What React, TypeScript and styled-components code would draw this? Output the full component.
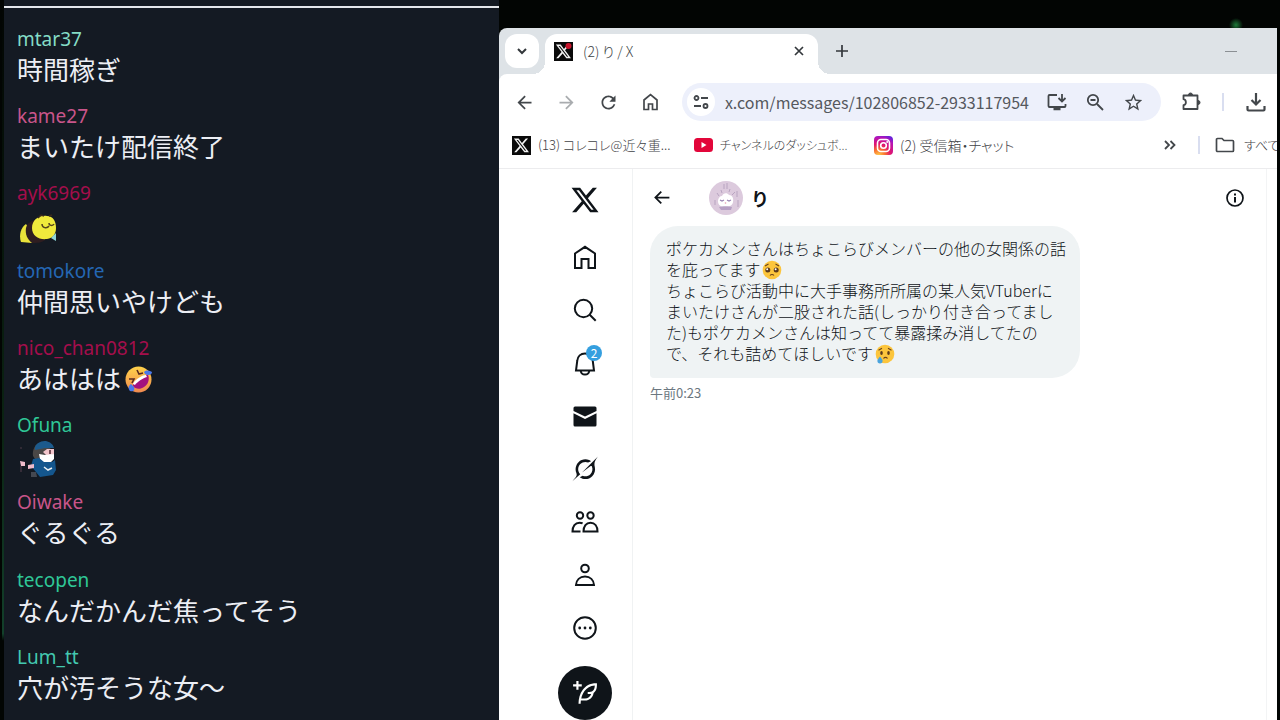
import React from "react";
import styled, { createGlobalStyle } from "styled-components";

const GlobalStyle = createGlobalStyle`
  * { box-sizing: border-box; }
  body {
    margin: 0;
    background: #020503;
    font-family: "Noto Sans CJK JP", "Noto Sans", sans-serif;
  }
  button { border: 0; padding: 0; background: none; color: inherit; font: inherit; cursor: pointer; }
  svg { display: block; flex: none; }
  a { color: inherit; text-decoration: none; }
`;

/* ---------- stage ---------- */

const Stage = styled.div`
  display: grid;
  grid-template-columns: minmax(0, 495fr) minmax(0, 778fr);
  height: 100vh;
  padding: 0 3px 0 4px;
  overflow: hidden;
  background:
    radial-gradient(circle at 1236px 25px, #1c7a38 0, transparent 7px),
    linear-gradient(#020503, #0b2413 60%, #12402a 88%, #020503 89%) 2px 0 / 2px 100% no-repeat,
    #020503;
`;

/* ---------- chat ---------- */

const Chat = styled.section`
  display: flex;
  flex-direction: column;
  background: #141a23;
  overflow: hidden;
`;

const ChatTop = styled.div`
  height: 8px;
  flex: none;
  border-bottom: 2px solid #e4e7ec;
`;

const ChatList = styled.ul`
  display: flex;
  flex-direction: column;
  flex: 1;
  list-style: none;
  margin: 0;
  padding: 17px 13px 0;
`;

const ChatItem = styled.li`
  display: grid;
  grid-template-rows: 28px 1fr;
  flex: 1 0 76px;
`;

const UserName = styled.span<{ $color: string }>`
  font: 19px/28px "Noto Sans", sans-serif;
  color: ${(p) => p.$color};
`;

const ChatText = styled.span`
  display: flex;
  align-items: flex-start;
  font-size: 26px;
  line-height: 32px;
  color: #eceef4;
  white-space: nowrap;
`;

const EmoteSlot = styled.span`
  padding: 2px 0 0 3px;
`;

const EmojiSlot = styled.span`
  padding: 3px 0 0 3px;
`;

/* ---------- browser ---------- */

const Browser = styled.section`
  display: flex;
  flex-direction: column;
  margin-top: 28px;
  min-height: 0;
  background: #dee3e7;
  border-radius: 8px 0 0 0;
  overflow: hidden;
`;

const TabStrip = styled.div`
  display: flex;
  align-items: flex-start;
  height: 46px;
  padding: 6px 39px 0 6px;
  color: #33373b;
`;

const TabSearch = styled.button`
  display: grid;
  place-items: center;
  width: 34px;
  height: 34px;
  margin-right: 6px;
  border-radius: 12px;
  background: #fff;
`;

const Tab = styled.div`
  position: relative;
  display: flex;
  align-items: center;
  gap: 10px;
  width: 273px;
  height: 40px;
  padding: 0 12px 6px 9px;
  border-radius: 12px 12px 0 0;
  background: #fff;

  &::before, &::after {
    content: "";
    position: absolute;
    bottom: 0;
    width: 12px;
    height: 12px;
  }
  &::before {
    left: -12px;
    background: radial-gradient(circle at 0 0, transparent 12px, #fff 12px);
  }
  &::after {
    right: -12px;
    background: radial-gradient(circle at 100% 0, transparent 12px, #fff 12px);
  }
`;

const TabTitle = styled.span`
  flex: 1;
  font-size: 14px;
  line-height: 20px;
  font-weight: 300;
  color: #3c3f43;
  font-feature-settings: "palt";
`;

const StripButton = styled.button<{ $push?: boolean }>`
  display: grid;
  place-items: center;
  width: 14px;
  height: 34px;
  margin-left: ${(p) => (p.$push ? "auto" : "17px")};
`;

const TabClose = styled.button`
  display: grid;
  place-items: center;
  width: 14px;
  height: 20px;
`;

const Chrome = styled.div`
  background: #fff;
  border-radius: 8px 0 0 0;
  border-bottom: 1px solid #ececee;
`;

const Toolbar = styled.div`
  display: flex;
  align-items: center;
  height: 56px;
  padding-left: 4px;
  color: #43474b;
`;

const ToolButton = styled.button<{ $dim?: boolean; $width?: number }>`
  display: grid;
  place-items: center;
  width: ${(p) => p.$width ?? 42}px;
  height: 40px;
  flex: none;
  color: ${(p) => (p.$dim ? "#a9acaf" : "inherit")};
`;

const Omnibox = styled.form`
  display: flex;
  align-items: center;
  flex: 1;
  min-width: 0;
  height: 38px;
  margin: 0 10px 0 11px;
  padding: 0 9px 0 5px;
  border-radius: 20px;
  background: #edf0fb;
`;

const SiteInfo = styled.button`
  display: grid;
  place-items: center;
  width: 28px;
  height: 28px;
  flex: none;
  border-radius: 50%;
  background: #fff;
`;

const UrlInput = styled.input`
  flex: 1;
  min-width: 0;
  padding: 0 0 0 10px;
  border: 0;
  outline: 0;
  background: transparent;
  font: 16px/24px "Noto Sans CJK JP", sans-serif;
  color: #55585e;
`;

const Divider = styled.span<{ $gap: number }>`
  width: 2px;
  height: 18px;
  flex: none;
  margin: 0 ${(p) => p.$gap}px;
  background: #d9def0;
`;

const Bookmarks = styled.nav`
  display: flex;
  align-items: center;
  height: 38px;
  padding: 0 0 8px 13px;
  overflow: hidden;
  color: #43474b;
`;

const Bookmark = styled.a<{ $width?: number; $size: number }>`
  display: flex;
  align-items: center;
  gap: 7px;
  flex: none;
  width: ${(p) => (p.$width ? `${p.$width}px` : "auto")};
  font-size: ${(p) => p.$size}px;
  line-height: 20px;
  font-weight: 300;
  color: #3f4246;
  white-space: nowrap;
  font-feature-settings: "palt";
`;

const Spacer = styled.span`
  flex: 1;
`;

const AllBookmarks = styled.a`
  display: flex;
  align-items: center;
  gap: 9px;
  width: 62px;
  flex: none;
  overflow: hidden;
  white-space: nowrap;
  font-size: 13px;
  line-height: 20px;
  font-weight: 300;
  color: #3f4246;
  font-feature-settings: "palt";
`;

/* ---------- page ---------- */

const Page = styled.div`
  display: flex;
  flex: 1;
  min-height: 0;
  padding-right: 10px;
  background: #fff;
  color: #0f1419;
`;

const SideNav = styled.nav`
  display: flex;
  flex-direction: column;
  align-items: center;
  width: 134px;
  flex: none;
  padding-left: 39px;
  border-right: 1px solid #f0f2f3;
`;

const NavLink = styled.a<{ $height?: number }>`
  display: grid;
  place-items: center;
  width: 54px;
  height: ${(p) => p.$height ?? 53}px;
  flex: none;
`;

const BellWrap = styled.span`
  position: relative;
`;

const Badge = styled.span`
  position: absolute;
  top: -4px;
  right: -3px;
  width: 16px;
  height: 16px;
  border-radius: 50%;
  background: #359fdf;
  color: #fff;
  font-size: 12px;
  line-height: 16px;
  text-align: center;
`;

const PostButton = styled.button`
  display: grid;
  place-items: center;
  width: 54px;
  height: 54px;
  flex: none;
  margin-top: 12px;
  border-radius: 50%;
  background: #0f1419;
  color: #fff;
`;

const Conversation = styled.main`
  flex: 1;
  min-width: 0;
  padding: 0 17px;
  border-right: 1px solid #f3f4f5;
`;

const ConversationHead = styled.header`
  display: flex;
  align-items: center;
  height: 57px;
  padding-right: 3px;
`;

const HeadButton = styled.button`
  display: grid;
  place-items: center;
  width: 22px;
  height: 22px;
`;

const Avatar = styled.span`
  width: 34px;
  height: 34px;
  margin: 0 8px 0 37px;
  border-radius: 50%;
  overflow: hidden;
`;

const PeerName = styled.h1`
  flex: 1;
  margin: 0;
  font-size: 18px;
  line-height: 24px;
  font-weight: 700;
`;

const Bubble = styled.p`
  width: max-content;
  max-width: 100%;
  margin: 0;
  padding: 12px 14px 14px 16px;
  border-radius: 28px 28px 28px 4px;
  background: #eff3f4;
  font-size: 16px;
  line-height: 21px;
  font-weight: 300;
  color: #0f1419;
  white-space: nowrap;

  svg { display: inline-block; margin-left: 2px; vertical-align: -4px; }
`;

const Time = styled.time`
  display: block;
  margin-top: 5px;
  font-size: 13px;
  line-height: 20px;
  color: #6b7780;
`;

/* ---------- drawings ---------- */

const X_PATH =
  "M18.244 2.25h3.308l-7.227 8.26 8.502 11.24H16.17l-5.214-6.817L4.99 21.75H1.68l7.73-8.835L1.254 2.25H8.08l4.713 6.231zm-1.161 17.52h1.833L7.084 4.126H5.117z";

const Solid = ({ d, size, box = "0 0 24 24" }: { d: string; size: number; box?: string }) => (
  <svg width={size} height={size} viewBox={box} fill="currentColor" aria-hidden="true">
    <path d={d} />
  </svg>
);

const Line = ({
  size = 28,
  width = 2,
  box = 28,
  children,
}: {
  size?: number;
  width?: number;
  box?: number;
  children: React.ReactNode;
}) => (
  <svg
    width={size}
    height={size}
    viewBox={`0 0 ${box} ${box}`}
    fill="none"
    stroke="currentColor"
    strokeWidth={width}
    aria-hidden="true"
  >
    {children}
  </svg>
);

const XFavicon = ({ dot }: { dot?: boolean }) => (
  <svg width="19" height="19" viewBox="0 0 19 19" aria-hidden="true">
    <rect width="19" height="19" fill="#0a0a0a" />
    <path d={X_PATH} transform="translate(1 1) scale(.7)" fill="#f2f2f2" />
    {dot && <circle cx="14.500" cy="4" r="3" fill="#c8142c" />}
  </svg>
);

const YouTubeIcon = () => (
  <svg width="19" height="14" viewBox="0 0 19 14" aria-hidden="true">
    <rect width="19" height="14" rx="3.500" fill="#e2063a" />
    <path d="M7.500 4v6l5-3z" fill="#fff" />
  </svg>
);

const InstagramIcon = () => (
  <svg width="19" height="19" viewBox="0 0 19 19" aria-hidden="true">
    <defs>
      <radialGradient id="ig" cx=".25" cy="1.050" r="1.150">
        <stop offset="0" stopColor="#ffd34d" />
        <stop offset=".3" stopColor="#f9722f" />
        <stop offset=".55" stopColor="#e0156e" />
        <stop offset=".85" stopColor="#b414b8" />
        <stop offset="1" stopColor="#6a22d8" />
      </radialGradient>
    </defs>
    <rect width="19" height="19" rx="4" fill="url(#ig)" />
    <rect x="3.500" y="3.500" width="12" height="12" rx="3.500" fill="none" stroke="#fff" strokeWidth="1.600" />
    <circle cx="9.500" cy="9.500" r="2.800" fill="none" stroke="#fff" strokeWidth="1.600" />
    <circle cx="13.200" cy="5.900" r="1" fill="#fff" />
  </svg>
);

const Bee = () => (
  <svg width="36" height="36" viewBox="0 0 36 36" role="img" aria-label="蜂">
    <path d="M6 15C0 19-1 28 1 33l11 1 3-4z" fill="#e9e23a" />
    <path d="M6 19c1-5 6-8 11-8l8 20c-4 3-8 3-13 3C7 30 5 25 6 19z" fill="#2e1d20" />
    <path d="M12 19C12 11 19 6 27 7c6 0 9 5 9 12 0 6-3 10-9 11-8 1-15-3-15-11z" fill="#f0ea3c" />
    <path d="M22 15c0 4 5 5 7 2m0-3c0 3 4 3 5 1" stroke="#55431d" strokeWidth="1.500" fill="none" />
    <path d="M18 9l3-3 3 1m5 0l3-1" stroke="#3a2a1c" strokeWidth="1.500" fill="none" />
    <path d="M31 29l5-5v8z" fill="#8fd6d8" />
  </svg>
);

const Ninja = () => (
  <svg width="36" height="36" viewBox="0 0 36 36" role="img" aria-label="忍者">
    <path d="M13 15c-1-6 2-13 9-14l10 8v7l-3 5H17z" fill="#4a4746" />
    <path d="M15 6C17 1 22 0 26 0c4 1 7 3 8 7l-9 0-10 2z" fill="#1c5a8c" />
    <path d="M23 11l4-3 7 0 0 5-6 3z" fill="#f3c6cc" />
    <path d="M30 9v4" stroke="#4b2430" strokeWidth="1.500" />
    <path d="M19 13l6 1 9-1v5l-3 3h-8l-3-3z" fill="#fff" />
    <path d="M13 18l6-1 5 4h8l3-2 1 10-3 5-13 2-4-5-5-6z" fill="#14568d" />
    <path d="M0 20l5 1v4H1zM8 24l6-1v4l-6 1z" fill="#f0bccb" />
    <path d="M24 26l4 3 4-2m-3 1v2" stroke="#e8eef2" strokeWidth="1.500" fill="none" />
    <path d="M0 7h2M1 25v6" stroke="#4d3a48" strokeWidth="1.200" />
    <path d="M11 31l5 0 1 5h-6z" fill="#444851" />
  </svg>
);

const Rofl = () => (
  <svg width="29" height="29" viewBox="0 0 29 29" role="img" aria-label="🤣">
    <defs>
      <linearGradient id="rofl" x1="0" y1="0" x2="0" y2="1">
        <stop offset="0" stopColor="#ffd24a" />
        <stop offset="1" stopColor="#f08a50" />
      </linearGradient>
    </defs>
    <circle cx="14.500" cy="14.500" r="13" fill="url(#rofl)" />
    <path d="M9 21c-1-3 12-13 15-11 2 4 0 10-4 12-4 3-9 2-11-1z" fill="#a3127f" />
    <path d="M9 19c0-3 10-10 13-9l1 2c-4 1-10 5-12 8z" fill="#fff" />
    <path d="M5 14l5 0-2 4M13 5l2 4 4-1" stroke="#5a2a20" strokeWidth="1.600" fill="none" />
    <path d="M20 7c3-3 6-1 8 0 0 3-4 4-7 2z" fill="#4a78ea" />
    <path d="M7 19c-3 2-3 5-1 7 4 1 5-1 4-4z" fill="#4a78ea" />
  </svg>
);

const Pleading = () => (
  <svg width="20" height="20" viewBox="0 0 20 20" role="img" aria-label="🥺">
    <circle cx="10" cy="10" r="9.300" fill="#fcc53c" />
    <circle cx="5.800" cy="10" r="2.500" fill="#5c3b1c" />
    <circle cx="14.200" cy="10" r="2.500" fill="#5c3b1c" />
    <circle cx="5.200" cy="9.200" r="1" fill="#fff" />
    <circle cx="13.600" cy="9.200" r="1" fill="#fff" />
    <path d="M3 6l3.500-2M17 6l-3.500-2M8 15.500c1-1.300 3-1.300 4 0" stroke="#6b431d" strokeWidth="1.100" fill="none" />
  </svg>
);

const Crying = () => (
  <svg width="20" height="20" viewBox="0 0 20 20" role="img" aria-label="😢">
    <circle cx="10" cy="10" r="9.300" fill="#fcc53c" />
    <ellipse cx="6.500" cy="9" rx="1.300" ry="1.900" fill="#5c3b1c" />
    <ellipse cx="13.500" cy="9" rx="1.300" ry="1.900" fill="#5c3b1c" />
    <path d="M3.500 6.200l3.500-2M16.500 6.200l-3.500-2M8.500 14.500c1-1.500 3-1.500 4 0" stroke="#6b431d" strokeWidth="1.100" fill="none" />
    <path d="M5 12.500c1.500 2 2.600 3 2.600 4.300a2.600 2.600 0 0 1-5.200 0c0-1.300 1.100-2.300 2.600-4.300z" fill="#4aa3dc" />
  </svg>
);

const AvatarArt = () => (
  <svg width="34" height="34" viewBox="0 0 34 34" aria-hidden="true">
    <rect width="34" height="34" fill="#dccadd" />
    <path d="M15 3v5M18 2v6M12 9l1 3M21 8l-1 3M8 12l2 3M26 11l-3 3M28 10v6M29 19v7M6 19v5" stroke="#b8a4c0" strokeWidth="1" />
    <path d="M9 20c0-3 2-5 4-5 1-3 5-4 7-1 3 0 5 3 4 7 0 3-4 5-8 5s-7-2-7-6z" fill="#fff" />
    <path d="M11 19l2 1 2-1M18 19l2 1 2-1" stroke="#9c86b4" strokeWidth="1.200" fill="none" />
    <path d="M10 26c3-1 10-1 13 0l-1 3H12z" fill="#b6a0c4" />
    <circle cx="16.500" cy="22" r=".8" fill="#e59ab0" />
  </svg>
);

/* ---------- data ---------- */

type Entry = { name: string; color: string; text?: string; art?: React.ReactNode };

const entries: Entry[] = [
  { name: "mtar37", color: "#84dcc6", text: "時間稼ぎ" },
  { name: "kame27", color: "#c9558a", text: "まいたけ配信終了" },
  { name: "ayk6969", color: "#a50e4c", art: <EmoteSlot><Bee /></EmoteSlot> },
  { name: "tomokore", color: "#2467b4", text: "仲間思いやけども" },
  { name: "nico_chan0812", color: "#a50e4c", text: "あははは", art: <EmojiSlot><Rofl /></EmojiSlot> },
  { name: "Ofuna", color: "#2fc797", art: <EmoteSlot><Ninja /></EmoteSlot> },
  { name: "Oiwake", color: "#c9558a", text: "ぐるぐる" },
  { name: "tecopen", color: "#2fc797", text: "なんだかんだ焦ってそう" },
  { name: "Lum_tt", color: "#43c9b0", text: "穴が汚そうな女～" },
];

export default function App() {
  return (
    <>
      <GlobalStyle />
      <Stage>
        <Chat aria-label="チャット">
          <ChatTop />
          <ChatList>
            {entries.map((e) => (
              <ChatItem key={e.name}>
                <UserName $color={e.color}>{e.name}</UserName>
                <ChatText>
                  {e.text}
                  {e.art}
                </ChatText>
              </ChatItem>
            ))}
          </ChatList>
        </Chat>

        <Browser>
          <TabStrip>
            <TabSearch aria-label="タブを検索">
              <Line size={12} box={12}><path d="M2 4l4 4 4-4" /></Line>
            </TabSearch>
            <Tab>
              <XFavicon dot />
              <TabTitle>(2) り / X</TabTitle>
              <TabClose aria-label="タブを閉じる">
                <Line size={12} box={12} width={1.7}><path d="M2 2l8 8M10 2l-8 8" /></Line>
              </TabClose>
            </Tab>
            <StripButton aria-label="新しいタブ">
              <Line size={14} box={14} width={1.7}><path d="M7 1v12M1 7h12" /></Line>
            </StripButton>
            <StripButton $push aria-label="最小化">
              <Line size={12} box={12} width={1}><path d="M0 6.500h12" stroke="#8b9094" /></Line>
            </StripButton>
          </TabStrip>

          <Chrome>
            <Toolbar>
              <ToolButton aria-label="戻る">
                <Solid size={21} d="M20 11H7.830l5.590-5.590L12 4l-8 8 8 8 1.410-1.410L7.830 13H20z" />
              </ToolButton>
              <ToolButton $dim aria-label="進む">
                <Solid size={21} d="M4 11h12.170l-5.590-5.590L12 4l8 8-8 8-1.410-1.410L16.170 13H4z" />
              </ToolButton>
              <ToolButton aria-label="再読み込み">
                <Solid size={21} d="M17.650 6.350C16.200 4.900 14.210 4 12 4c-4.420 0-7.990 3.580-7.990 8s3.570 8 7.990 8c3.730 0 6.840-2.550 7.730-6h-2.080c-.82 2.330-3.040 4-5.650 4-3.310 0-6-2.690-6-6s2.690-6 6-6c1.660 0 3.140.69 4.220 1.780L13 11h7V4z" />
              </ToolButton>
              <ToolButton aria-label="ホーム">
                <Line size={20} box={20} width={1.7}>
                  <path d="M4 8l6.500-5.500L17 8v9.500h-4.500V12h-4v5.500H4z" />
                </Line>
              </ToolButton>
              <Omnibox>
                <SiteInfo type="button" aria-label="サイト情報">
                  <Line size={18} box={18} width={1.8}>
                    <circle cx="4.500" cy="5" r="2" />
                    <path d="M9 5h7M2 13h7" />
                    <circle cx="13.500" cy="13" r="2" />
                  </Line>
                </SiteInfo>
                <UrlInput aria-label="アドレス" defaultValue="x.com/messages/102806852-2933117954" />
                <ToolButton type="button" $width={38} aria-label="アプリをインストール">
                  <Line size={22} box={22} width={1.8}>
                    <path d="M11 4H3.500a1 1 0 0 0-1 1v10a1 1 0 0 0 1 1h15a1 1 0 0 0 1-1v-2" />
                    <path d="M7.500 18h7" strokeWidth="2.500" />
                    <path d="M16 3v7M12.500 7l3.500 3.500L19.500 7" />
                  </Line>
                </ToolButton>
                <ToolButton type="button" $width={38} aria-label="ズーム">
                  <Line size={20} box={20} width={1.8}>
                    <circle cx="8" cy="8" r="5.200" />
                    <path d="M12 12l6 6M5.500 8h5" />
                  </Line>
                </ToolButton>
                <ToolButton type="button" $width={38} aria-label="ブックマークに追加">
                  <Solid size={21} d="M22 9.240l-7.190-.62L12 2 9.190 8.630 2 9.240l5.460 4.730L5.820 21 12 17.270 18.180 21l-1.630-7.030L22 9.240zM12 15.400l-3.760 2.270 1-4.280-3.320-2.880 4.380-.38L12 6.100l1.710 4.040 4.380.38-3.320 2.880 1 4.280L12 15.400z" />
                </ToolButton>
              </Omnibox>
              <ToolButton $width={40} aria-label="拡張機能">
                <Line size={22} box={22} width={1.8}>
                  <path d="M3.500 4.500h14v13.500h-14v-3.800c3.200-.6 3.200-5.400 0-6z" strokeLinejoin="round" />
                  <path d="M8.500 4a2 2 0 0 1 4 0zM18 9.500a2 2 0 0 1 0 4z" fill="currentColor" strokeWidth="1" />
                </Line>
              </ToolButton>
              <Divider $gap={11} />
              <ToolButton aria-label="ダウンロード">
                <Line size={22} box={22} width={2.2}>
                  <path d="M11 2v11M6.500 9l4.500 4.500L15.500 9M2.500 15v3.500a1 1 0 0 0 1 1h15a1 1 0 0 0 1-1V15" />
                </Line>
              </ToolButton>
            </Toolbar>

            <Bookmarks aria-label="ブックマーク">
              <Bookmark href="#korekore" $width={182} $size={13}>
                <XFavicon />
                (13) コレコレ@近々重...
              </Bookmark>
              <Bookmark href="#dashboard" $width={180} $size={12}>
                <YouTubeIcon />
                チャンネルのダッシュボ...
              </Bookmark>
              <Bookmark href="#inbox" $size={14}>
                <InstagramIcon />
                (2) 受信箱・チャット
              </Bookmark>
              <Spacer />
              <ToolButton $width={26} aria-label="その他のブックマーク">
                <Line size={12} box={12} width={1.8}><path d="M1 2l4 4-4 4M6.500 2l4 4-4 4" /></Line>
              </ToolButton>
              <Divider $gap={15} />
              <AllBookmarks href="#all">
                <Line size={20} box={20} width={1.7}>
                  <path d="M1.500 4.500a1 1 0 0 1 1-1H7l2 2h8.500a1 1 0 0 1 1 1V15.500a1 1 0 0 1-1 1h-15a1 1 0 0 1-1-1z" stroke="#43474b" />
                </Line>
                すべて
              </AllBookmarks>
            </Bookmarks>
          </Chrome>

          <Page>
            <SideNav aria-label="メイン">
              <NavLink href="#x" $height={61} aria-label="X"><Solid size={30} d={X_PATH} /></NavLink>
              <NavLink href="#home" aria-label="ホーム">
                <Line><path d="M4 10.500L14 3.800l10 6.700V25h-6.500v-9h-7v9H4z" /></Line>
              </NavLink>
              <NavLink href="#search" aria-label="検索">
                <Line><circle cx="12.500" cy="12.500" r="8.700" /><path d="M18.700 18.700l6 6" /></Line>
              </NavLink>
              <NavLink href="#notifications" aria-label="通知">
                <BellWrap>
                  <Line>
                    <path d="M14 4.500c-4.300 0-7.300 3-7.700 7L5 21.500h18l-1.300-10c-.4-4-3.400-7-7.700-7z" />
                    <path d="M9.800 22c.5 4.700 7.900 4.700 8.400 0" />
                  </Line>
                  <Badge>2</Badge>
                </BellWrap>
              </NavLink>
              <NavLink href="#messages" aria-label="メッセージ">
                <Solid size={28} box="0 0 28 28" d="M2.500 9V6a1.500 1.500 0 0 1 1.500-1.500h20A1.500 1.500 0 0 1 25.500 6v3L14 14.600zM2.500 11.300L14 17l11.500-5.700V23a1.500 1.500 0 0 1-1.500 1.500H4A1.500 1.500 0 0 1 2.500 23z" />
              </NavLink>
              <NavLink href="#grok" aria-label="Grok">
                <Solid
                  size={26}
                  box="0 0 33 32"
                  d="M12.745 20.540l10.970-8.190c.539-.4 1.307-.244 1.564.38 1.349 3.288.746 7.241-1.938 9.955-2.683 2.714-6.417 3.310-9.830 1.954l-3.728 1.745c5.347 3.697 11.840 2.782 15.898-1.324 3.219-3.255 4.216-7.692 3.284-11.693l.008.009c-1.351-5.878.332-8.227 3.782-13.031L33 0l-4.540 4.590v-.014L12.743 20.544m-2.263 1.987c-3.837-3.707-3.175-9.446.1-12.755 2.420-2.449 6.388-3.448 9.852-1.979l3.720-1.737c-.67-.49-1.530-1.017-2.515-1.387-4.455-1.854-9.789-.931-13.410 2.728-3.483 3.523-4.579 8.940-2.697 13.561 1.405 3.454-.899 5.898-3.220 8.364C1.077 30.830.262 31.657 0 32l10.478-9.466"
                />
              </NavLink>
              <NavLink href="#communities" aria-label="コミュニティ">
                <Line>
                  <circle cx="9" cy="7.500" r="3.200" />
                  <circle cx="19.500" cy="7.500" r="3.200" />
                  <path d="M12.500 23.500c0-5.300 2.700-8.800 7-8.800s7 3.500 7 8.800zM9.500 23.500h-8c0-5.300 2.700-8.800 7-8.800 1.200 0 2.200.2 3.100.7" />
                </Line>
              </NavLink>
              <NavLink href="#profile" aria-label="プロフィール">
                <Line>
                  <circle cx="14" cy="7.500" r="3.800" />
                  <path d="M5 24c.3-5 3.800-8.500 9-8.500s8.700 3.500 9 8.500z" />
                </Line>
              </NavLink>
              <NavLink href="#more" aria-label="もっと見る">
                <Line>
                  <circle cx="14" cy="14" r="10.800" />
                  <g fill="currentColor" stroke="none">
                    <circle cx="8.700" cy="14" r="1.400" />
                    <circle cx="14" cy="14" r="1.400" />
                    <circle cx="19.300" cy="14" r="1.400" />
                  </g>
                </Line>
              </NavLink>
              <PostButton aria-label="ポストする">
                <Solid size={26} d="M23 3c-6.620-.1-10.380 2.421-13.050 6.030C7.290 12.610 6 17.331 6 22h2c0-1.007.07-2.012.19-3H12c4.100 0 7.480-3.082 7.940-7.054C22.790 10.147 23.170 6.359 23 3zm-7 8h-1.500v2H16c.63-.016 1.200-.08 1.720-.188C16.950 15.240 14.680 17 12 17H8.550c.57-2.512 1.570-4.851 3-6.780 2.160-2.912 5.290-4.911 9.450-5.187C20.950 8.079 19.900 11 16 11zM4 9V6H1V4h3V1h2v3h3v2H6v3H4z" />
              </PostButton>
            </SideNav>

            <Conversation>
              <ConversationHead>
                <HeadButton aria-label="戻る">
                  <Solid size={21} d="M7.414 13l5.043 5.040-1.414 1.420L3.586 12l7.457-7.460 1.414 1.420L7.414 11H21v2z" />
                </HeadButton>
                <Avatar><AvatarArt /></Avatar>
                <PeerName>り</PeerName>
                <HeadButton aria-label="会話の情報">
                  <Line size={20} box={20} width={1.7}>
                    <circle cx="10" cy="10" r="8" />
                    <path d="M10 9v5.500M10 5.500v2" strokeWidth="2" />
                  </Line>
                </HeadButton>
              </ConversationHead>
              <Bubble>
                ポケカメンさんはちょこらびメンバーの他の女関係の話<br />
                を庇ってます<Pleading /><br />
                ちょこらび活動中に大手事務所所属の某人気VTuberに<br />
                まいたけさんが二股された話(しっかり付き合ってまし<br />
                た)もポケカメンさんは知ってて暴露揉み消してたの<br />
                で、それも詰めてほしいです<Crying />
              </Bubble>
              <Time>午前0:23</Time>
            </Conversation>
          </Page>
        </Browser>
      </Stage>
    </>
  );
}
